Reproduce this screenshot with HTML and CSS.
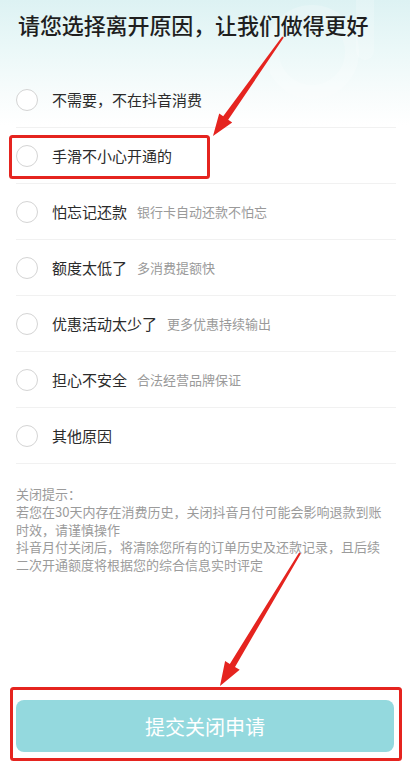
FILE: index.html
```html
<!DOCTYPE html>
<html lang="zh-CN">
<head>
<meta charset="utf-8">
<title>关闭抖音月付</title>
<link rel="stylesheet" href="styles.css">
</head>
<body>
<div class="page">
  <svg class="deco" width="140" height="120" viewBox="0 0 140 120" aria-hidden="true">
    <circle cx="42" cy="52" r="40" fill="none" stroke="#ffffff" stroke-opacity="0.22" stroke-width="14"/>
    <rect x="86" y="-10" width="18" height="70" rx="9" fill="#ffffff" fill-opacity="0.2"/>
  </svg>
  <header class="header">
    <h1 class="title">请您选择离开原因，让我们做得更好</h1>
  </header>
  <ul class="reasons">
    <li class="reason"><span class="radio"></span><span class="main">不需要，不在抖音消费</span></li>
    <li class="reason"><span class="radio"></span><span class="main">手滑不小心开通的</span></li>
    <li class="reason"><span class="radio"></span><span class="main">怕忘记还款</span><span class="sub">银行卡自动还款不怕忘</span></li>
    <li class="reason"><span class="radio"></span><span class="main">额度太低了</span><span class="sub">多消费提额快</span></li>
    <li class="reason"><span class="radio"></span><span class="main">优惠活动太少了</span><span class="sub">更多优惠持续输出</span></li>
    <li class="reason"><span class="radio"></span><span class="main">担心不安全</span><span class="sub">合法经营品牌保证</span></li>
    <li class="reason"><span class="radio"></span><span class="main">其他原因</span></li>
  </ul>
  <div class="hint">
    <p>关闭提示：</p>
    <p>若您在30天内存在消费历史，关闭抖音月付可能会影响退款到账时效，请谨慎操作</p>
    <p>抖音月付关闭后，将清除您所有的订单历史及还款记录，且后续二次开通额度将根据您的综合信息实时评定</p>
  </div>
  <footer class="footer">
    <button class="submit" type="button">提交关闭申请</button>
  </footer>

  <svg class="annot" width="410" height="766" viewBox="0 0 410 766" aria-hidden="true">
    <rect x="10.5" y="136.5" width="198" height="41" rx="2" fill="none" stroke="#e5241f" stroke-width="3"/>
    <rect x="11.5" y="688.5" width="389" height="71" rx="2" fill="none" stroke="#e5241f" stroke-width="3"/>
    <polygon fill="#e5241f" points="283.8,37.6 228.2,119.7 232.2,122.6 213,136 219.2,113.4 223.2,116.3 282.2,36.4"/>
    <polygon fill="#e5241f" points="300.9,553.5 235.0,667.0 239.7,669.8 220,686 225.1,661.0 229.8,663.9 299.1,552.5"/>
  </svg>
</div>
</body>
</html>
```

FILE: styles.css
```css
* { box-sizing: border-box; }
html, body { margin: 0; padding: 0; }
body {
  font-family: "Noto Sans CJK SC", "Noto Sans", sans-serif;
  color: #333;
  background: #fff;
}
.page {
  position: relative;
  width: 410px;
  min-height: 766px;
  display: flex;
  flex-direction: column;
  overflow: hidden;
  background: linear-gradient(to bottom, #ddf2f3 0px, #ebf8f8 50px, #f8fcfc 95px, #ffffff 125px);
}
.deco {
  position: absolute;
  top: 0;
  right: 0;
}
.header {
  position: relative;
  height: 72px;
  padding: 11px 0 0 18px;
}
.title {
  margin: 0;
  font-size: 22px;
  line-height: 26px;
  font-weight: 500;
  color: #1f1f1f;
  letter-spacing: -0.1px;
}
.reasons {
  list-style: none;
  margin: 0 14px 0 16px;
  padding: 0;
}
.reason {
  height: 56px;
  display: flex;
  align-items: center;
  border-bottom: 1px solid #f1f1f1;
}
.radio {
  width: 22px;
  height: 22px;
  border: 1.5px solid #d4d4d4;
  border-radius: 50%;
  flex: none;
  margin-right: 14px;
  background: #fff;
}
.main {
  font-size: 15px;
  color: #2b2b2b;
}
.sub {
  margin-left: 10px;
  font-size: 13px;
  color: #9a9a9a;
}
.hint {
  padding: 21px 20px 0 16px;
  font-size: 13px;
  line-height: 17.8px;
  color: #9b9b9b;
}
.hint p { margin: 0; }
.footer {
  margin-top: auto;
  padding: 0 16px 14px 16px;
}
.submit {
  display: block;
  width: 100%;
  height: 52px;
  border: none;
  border-radius: 8px;
  background: #94d9de;
  color: #ffffff;
  font-family: "Noto Sans CJK SC", "Noto Sans", sans-serif;
  font-size: 20px;
}
.annot {
  position: absolute;
  top: 0;
  left: 0;
  pointer-events: none;
}
```
